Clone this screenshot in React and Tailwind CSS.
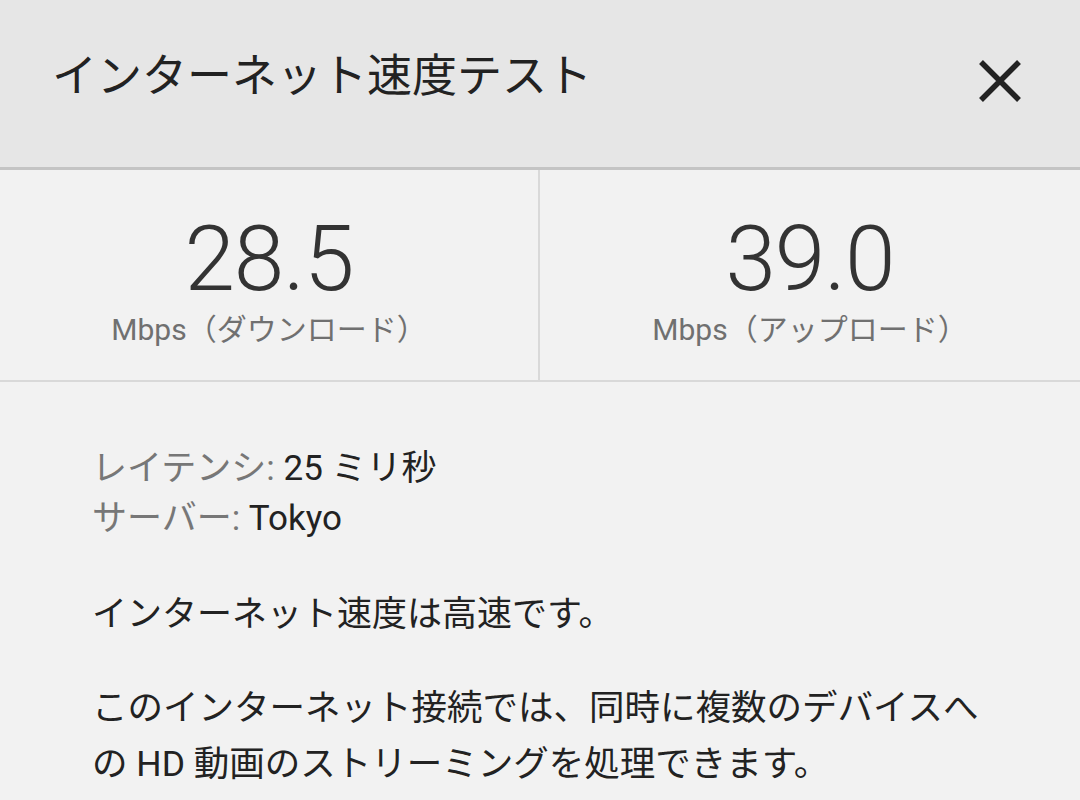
import { useState } from "react";

const jp = { fontFamily: 'Roboto, "Noto Sans CJK JP", sans-serif' };

function Stat({ value, label, border }) {
  return (
    <div
      className={`flex flex-col items-center pt-[44px] ${border ? "border-r-2 border-[#d9d9d9]" : ""}`}
    >
      <div className="text-[91px] leading-none font-light text-[#333333] tracking-[-1px]">
        {value}
      </div>
      <div className="mt-[10px] text-[30px] leading-none text-[#707070]">{label}</div>
    </div>
  );
}

export default function App() {
  const [open, setOpen] = useState(true);

  return (
    <div className="w-[1080px] h-[800px] overflow-hidden bg-[#f2f2f2]" style={jp}>
      <div className="h-[170px] bg-[#e6e6e6] border-b-[3px] border-[#c4c4c4] flex items-center justify-between pl-[52px] pr-[58px] pb-[14px]">
        <h1 className="text-[45px] leading-none text-[#222222]">インターネット速度テスト</h1>
        <button onClick={() => setOpen(!open)} className="w-[44px] h-[44px] mt-[8px]">
          <svg viewBox="0 0 44 44" className="w-[44px] h-[44px]">
            <path d="M3 3 L41 41 M41 3 L3 41" stroke="#222" strokeWidth="5.5" fill="none" />
          </svg>
        </button>
      </div>

      <div className="grid grid-cols-2 h-[212px] border-b-2 border-[#d9d9d9]">
        <Stat value="28.5" label="Mbps（ダウンロード）" border />
        <Stat value="39.0" label="Mbps（アップロード）" />
      </div>

      <div className="pl-[92px] pr-[80px] pt-[62px] text-[35px] text-[#222222]">
        <div className="leading-[50px]">
          <span className="text-[#777777]">レイテンシ:</span> 25 ミリ秒
        </div>
        <div className="leading-[50px]">
          <span className="text-[#777777]">サーバー:</span> Tokyo
        </div>
        <p className="mt-[46px] leading-[50px]">インターネット速度は高速です。</p>
        <p className="mt-[40px] text-[35.5px] leading-[56px]">
          このインターネット接続では、同時に複数のデバイスへの HD 動画のストリーミングを処理できます。
        </p>
      </div>
    </div>
  );
}
